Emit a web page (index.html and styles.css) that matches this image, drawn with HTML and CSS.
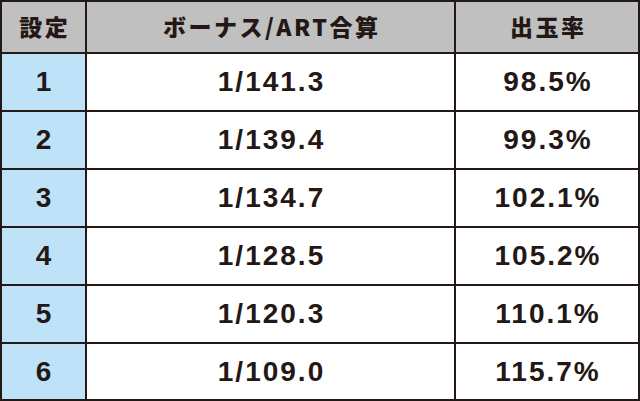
FILE: index.html
```html
<!DOCTYPE html>
<html lang="ja">
<head>
<meta charset="utf-8">
<link rel="stylesheet" href="styles.css">
</head>
<body>
<div class="table">
  <div class="cell head">設定</div>
  <div class="cell head">ボーナス/ART合算</div>
  <div class="cell head">出玉率</div>

  <div class="cell set">1</div>
  <div class="cell num">1/141.3</div>
  <div class="cell num">98.5%</div>

  <div class="cell set">2</div>
  <div class="cell num">1/139.4</div>
  <div class="cell num">99.3%</div>

  <div class="cell set">3</div>
  <div class="cell num">1/134.7</div>
  <div class="cell num">102.1%</div>

  <div class="cell set">4</div>
  <div class="cell num">1/128.5</div>
  <div class="cell num">105.2%</div>

  <div class="cell set">5</div>
  <div class="cell num">1/120.3</div>
  <div class="cell num">110.1%</div>

  <div class="cell set">6</div>
  <div class="cell num">1/109.0</div>
  <div class="cell num">115.7%</div>
</div>
</body>
</html>
```

FILE: styles.css
```css
html, body {
  margin: 0;
  padding: 0;
  background: #ffffff;
}

.table {
  width: 640px;
  height: 401px;
  box-sizing: border-box;
  padding: 2px;
  display: grid;
  grid-template-columns: 83px 367px 182px;
  grid-template-rows: 50px repeat(5, 56px) 55px;
  gap: 2px;
  background: #231815;
  color: #231815;
  font-family: "Liberation Sans", "Noto Sans CJK JP", sans-serif;
  font-weight: bold;
}

.cell {
  display: flex;
  align-items: center;
  justify-content: center;
  background: #ffffff;
}

.head {
  background: #c0c0c0;
  font-family: "Noto Sans CJK JP", sans-serif;
  font-weight: 900;
  font-size: 23px;
  letter-spacing: 2.5px;
  text-indent: 2.5px;
  padding-bottom: 3px;
  box-sizing: border-box;
}

.set {
  background: #bee3f8;
}

.set, .num {
  font-size: 28px;
  letter-spacing: 2px;
  text-indent: 2px;
}
```
